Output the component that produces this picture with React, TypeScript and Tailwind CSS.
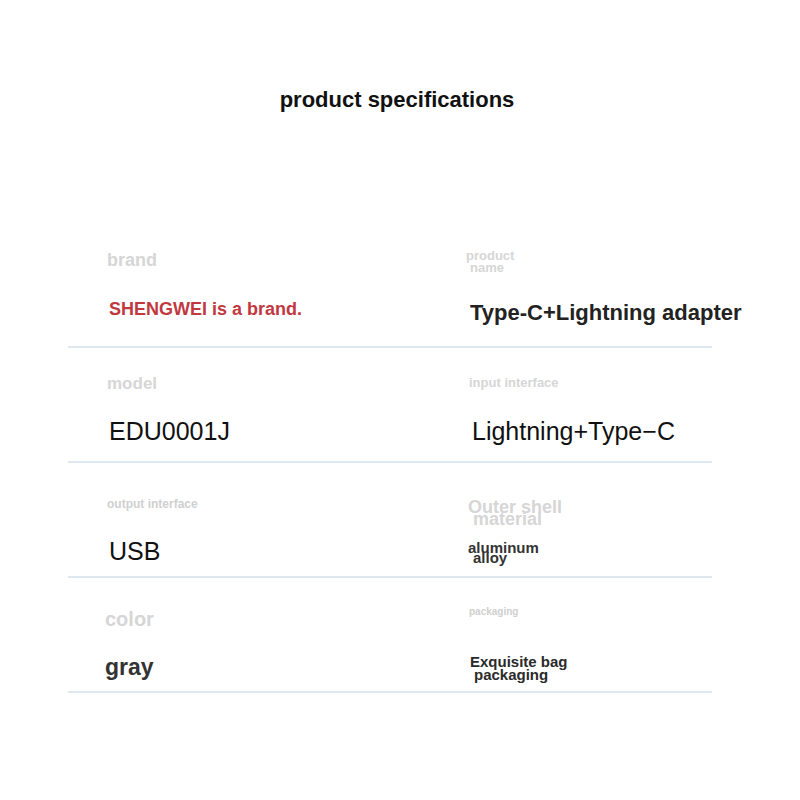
import React from 'react';

const font = { fontFamily: '"Liberation Sans", Arial, sans-serif' };

const Row: React.FC<{ left: React.ReactNode; right: React.ReactNode }> = ({ left, right }) => (
  <div className="flex h-[115px] border-b-2 border-[#dfe8ef]">
    <div className="w-[398px] shrink-0 pl-[39px] whitespace-nowrap">{left}</div>
    <div className="min-w-0 flex-1 whitespace-nowrap">{right}</div>
  </div>
);

export default function App() {
  return (
    <div className="min-h-[800px] w-[800px] overflow-hidden bg-white" style={font}>
      <div className="pt-[87px] text-center">
        <h1 className="ml-[-6px] text-[22px] leading-[26px] font-bold text-[#111]">product specifications</h1>
      </div>

      <div className="ml-[68px] mt-[120px] w-[644px]">
        <Row
          left={
            <>
              <div className="mt-[17px] text-[18px] leading-[20px] font-bold text-[#d6d6d6]">brand</div>
              <div className="mt-[29px] ml-[2px] text-[18px] leading-[20px] font-bold text-[#c1393f]">SHENGWEI is a brand.</div>
            </>
          }
          right={
            <>
              <div className="mt-[17px] text-[13px] leading-[12px] font-bold text-[#d6d6d6]">
                <div>product</div>
                <div className="pl-[4px]">name</div>
              </div>
              <div className="mt-[27px] ml-[4px] text-[22px] leading-[24px] font-bold text-[#222]">Type-C+Lightning adapter</div>
            </>
          }
        />
        <Row
          left={
            <>
              <div className="mt-[27px] text-[17px] leading-[18px] font-bold text-[#d6d6d6]">model</div>
              <div className="mt-[25px] ml-[2px] text-[25px] leading-[26px] text-[#111]">EDU0001J</div>
            </>
          }
          right={
            <>
              <div className="mt-[28px] ml-[3px] text-[13px] leading-[14px] font-bold text-[#d6d6d6]">input interface</div>
              <div className="mt-[28px] ml-[6px] text-[25px] leading-[26px] text-[#111]">Lightning+Type−C</div>
            </>
          }
        />
        <Row
          left={
            <>
              <div className="mt-[34px] text-[12px] leading-[14px] font-bold text-[#d0d0d0]">output interface</div>
              <div className="mt-[27px] ml-[2px] text-[25px] leading-[26px] text-[#111]">USB</div>
            </>
          }
          right={
            <>
              <div className="mt-[38px] ml-[2px] text-[18px] leading-[12px] font-bold text-[#d6d6d6]">
                <div>Outer shell</div>
                <div className="pl-[5px]">material</div>
              </div>
              <div className="mt-[18px] ml-[2px] text-[15px] leading-[10px] font-bold text-[#333]">
                <div>aluminum</div>
                <div className="pl-[5px]">alloy</div>
              </div>
            </>
          }
        />
        <Row
          left={
            <>
              <div className="mt-[30px] ml-[-2px] text-[20px] leading-[22px] font-bold text-[#d6d6d6]">color</div>
              <div className="mt-[25px] ml-[-2px] text-[23px] leading-[24px] font-bold text-[#333]">gray</div>
            </>
          }
          right={
            <>
              <div className="mt-[28px] ml-[3px] text-[10px] leading-[12px] font-bold text-[#d0d0d0]">packaging</div>
              <div className="mt-[37px] ml-[4px] text-[15px] leading-[13px] font-bold text-[#2a2a2a]">
                <div>Exquisite bag</div>
                <div className="pl-[4px]">packaging</div>
              </div>
            </>
          }
        />
      </div>
    </div>
  );
}
